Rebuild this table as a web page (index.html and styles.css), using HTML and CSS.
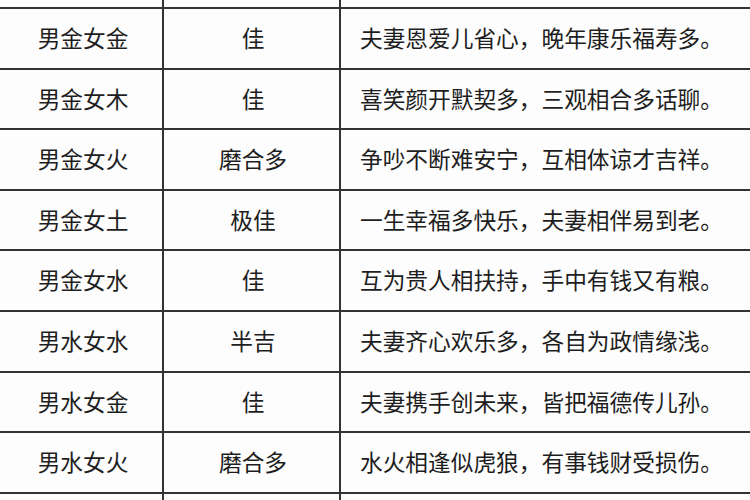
FILE: index.html
```html
<!DOCTYPE html>
<html lang="zh-CN">
<head>
<meta charset="utf-8">
<title>五行婚配表</title>
<link rel="stylesheet" href="styles.css">
</head>
<body>
<div class="sheet">
  <div class="cell c1"></div><div class="cell c2"></div><div class="cell c3"></div>
  <div class="cell c1">男金女金</div><div class="cell c2">佳</div><div class="cell c3">夫妻恩爱儿省心，晚年康乐福寿多。</div>
  <div class="cell c1">男金女木</div><div class="cell c2">佳</div><div class="cell c3">喜笑颜开默契多，三观相合多话聊。</div>
  <div class="cell c1">男金女火</div><div class="cell c2">磨合多</div><div class="cell c3">争吵不断难安宁，互相体谅才吉祥。</div>
  <div class="cell c1">男金女土</div><div class="cell c2">极佳</div><div class="cell c3">一生幸福多快乐，夫妻相伴易到老。</div>
  <div class="cell c1">男金女水</div><div class="cell c2">佳</div><div class="cell c3">互为贵人相扶持，手中有钱又有粮。</div>
  <div class="cell c1">男水女水</div><div class="cell c2">半吉</div><div class="cell c3">夫妻齐心欢乐多，各自为政情缘浅。</div>
  <div class="cell c1">男水女金</div><div class="cell c2">佳</div><div class="cell c3">夫妻携手创未来，皆把福德传儿孙。</div>
  <div class="cell c1">男水女火</div><div class="cell c2">磨合多</div><div class="cell c3">水火相逢似虎狼，有事钱财受损伤。</div>
  <div class="cell c1 last"></div><div class="cell c2 last"></div><div class="cell c3 last"></div>
</div>
</body>
</html>
```
FILE: styles.css
```css
html, body {
  margin: 0;
  padding: 0;
  background: #fff;
  overflow: hidden;
  width: 750px;
  height: 500px;
}
.sheet {
  display: grid;
  grid-template-columns: 164px 175px 1fr;
  grid-auto-rows: 58.6px;
  gap: 2px;
  background: #333;
  width: 754px;
  margin-left: -2px;
  margin-top: -51.6px;
  font-family: "Noto Sans CJK SC", "Microsoft YaHei", sans-serif;
  font-size: 22.7px;
  color: #1e1e1e;
}
.cell {
  background: #fdfdfd;
  display: flex;
  align-items: center;
  line-height: 1;
  white-space: nowrap;
}
.cell.last {
  height: 6px;
}
.c1 {
  justify-content: center;
  padding-left: 6px;
}
.c2 {
  justify-content: center;
  padding-left: 3px;
}
.c3 {
  padding-left: 19px;
}
```
